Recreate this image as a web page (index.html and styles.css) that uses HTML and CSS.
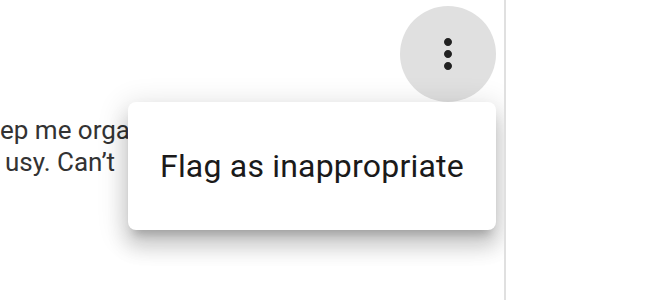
FILE: index.html
```html
<!DOCTYPE html>
<html lang="en">
<head>
    <meta charset="UTF-8">
    <title>Review menu</title>
    <link rel="stylesheet" href="styles.css">
</head>
<body>
    <div class="page">
        <div class="review">
            <div class="review-header">
                <button class="icon-btn" aria-label="More options">
                    <svg width="48" height="48" viewBox="0 0 24 24">
                        <path fill="#212121" d="M12 8c1.1 0 2-.9 2-2s-.9-2-2-2-2 .9-2 2 .9 2 2 2zm0 2c-1.1 0-2 .9-2 2s.9 2 2 2 2-.9 2-2-.9-2-2-2zm0 6c-1.1 0-2 .9-2 2s.9 2 2 2 2-.9 2-2-.9-2-2-2z"/>
                    </svg>
                </button>
            </div>
            <p class="review-text">
                <span class="line">ep me orga</span>
                <span class="line line-indent">usy. Can’t</span>
            </p>

            <ul class="menu">
                <li class="menu-item">Flag as inappropriate</li>
            </ul>
        </div>
        <div class="side"></div>
    </div>
</body>
</html>
```

FILE: styles.css
```css
html, body {
    margin: 0;
    padding: 0;
    height: 300px;
    overflow: hidden;
    background: #fff;
}
body {
    font-family: 'Roboto', 'Liberation Sans', sans-serif;
}
.page {
    display: flex;
    height: 300px;
}
.review {
    position: relative;
    width: 504px;
    border-right: 2px solid #e0e0e0;
    overflow: hidden;
}
.side {
    flex: 1;
}
.review-header {
    display: flex;
    justify-content: flex-end;
    padding: 6px 8px 0 0;
}
.icon-btn {
    width: 96px;
    height: 96px;
    border-radius: 50%;
    border: none;
    padding: 0;
    background: #e0e0e0;
    display: flex;
    align-items: center;
    justify-content: center;
}
.review-text {
    margin: 12px 0 0;
    font-size: 26px;
    line-height: 32px;
    color: #333;
}
.line {
    display: block;
    white-space: nowrap;
}
.line-indent {
    padding-left: 5px;
}
.menu {
    position: absolute;
    left: 128px;
    top: 102px;
    width: 368px;
    margin: 0;
    padding: 16px 0;
    list-style: none;
    background: #fff;
    border-radius: 8px;
    box-shadow: 0 10px 10px -6px rgba(0, 0, 0, 0.2),
                0 16px 20px 2px rgba(0, 0, 0, 0.14),
                0 6px 28px 5px rgba(0, 0, 0, 0.12);
}
.menu-item {
    height: 96px;
    line-height: 96px;
    padding: 0 32px;
    font-size: 32px;
    letter-spacing: 0.2px;
    color: #1a1a1a;
}
```
